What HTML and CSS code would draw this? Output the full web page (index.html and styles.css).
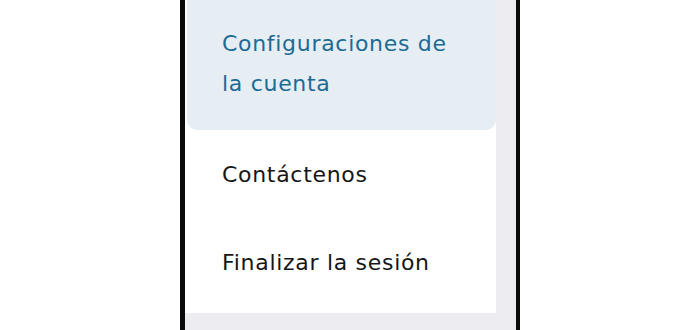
FILE: index.html
```html
<!DOCTYPE html>
<html lang="es">
<head>
<meta charset="utf-8">
<title>Menú</title>
<link rel="stylesheet" href="styles.css">
</head>
<body>
<div class="page">
  <div class="phone">
    <div class="screen">
      <nav class="menu">
        <a class="item active" href="#">Configuraciones de la cuenta</a>
        <a class="item" href="#">Contáctenos</a>
        <a class="item" href="#">Finalizar la sesión</a>
      </nav>
    </div>
  </div>
</div>
</body>
</html>
```
FILE: styles.css
```css
html, body {
  margin: 0;
  padding: 0;
  background: #ffffff;
}
.page {
  width: 700px;
  height: 330px;
  overflow: hidden;
  padding-left: 180px;
  box-sizing: border-box;
}
.phone {
  width: 340px;
  height: 330px;
  box-sizing: border-box;
  border-left: 5px solid #0a0a0a;
  border-right: 4px solid #0a0a0a;
  background: #ececf1;
}
.screen {
  width: 311px;
  display: flex;
  flex-direction: column;
}
.menu {
  background: #ffffff;
  display: flex;
  flex-direction: column;
  padding-bottom: 7px;
}
.item {
  display: block;
  margin-left: 2px;
  padding: 25px 40px 23px 35px;
  font-family: "DejaVu Sans", sans-serif;
  font-size: 22px;
  letter-spacing: 0.7px;
  line-height: 40px;
  color: #161616;
  text-decoration: none;
}
.item.active {
  background: #e6eef4;
  color: #1b6b94;
  padding-top: 24px;
  padding-bottom: 26px;
  border-radius: 0 0 10px 10px;
}
```
